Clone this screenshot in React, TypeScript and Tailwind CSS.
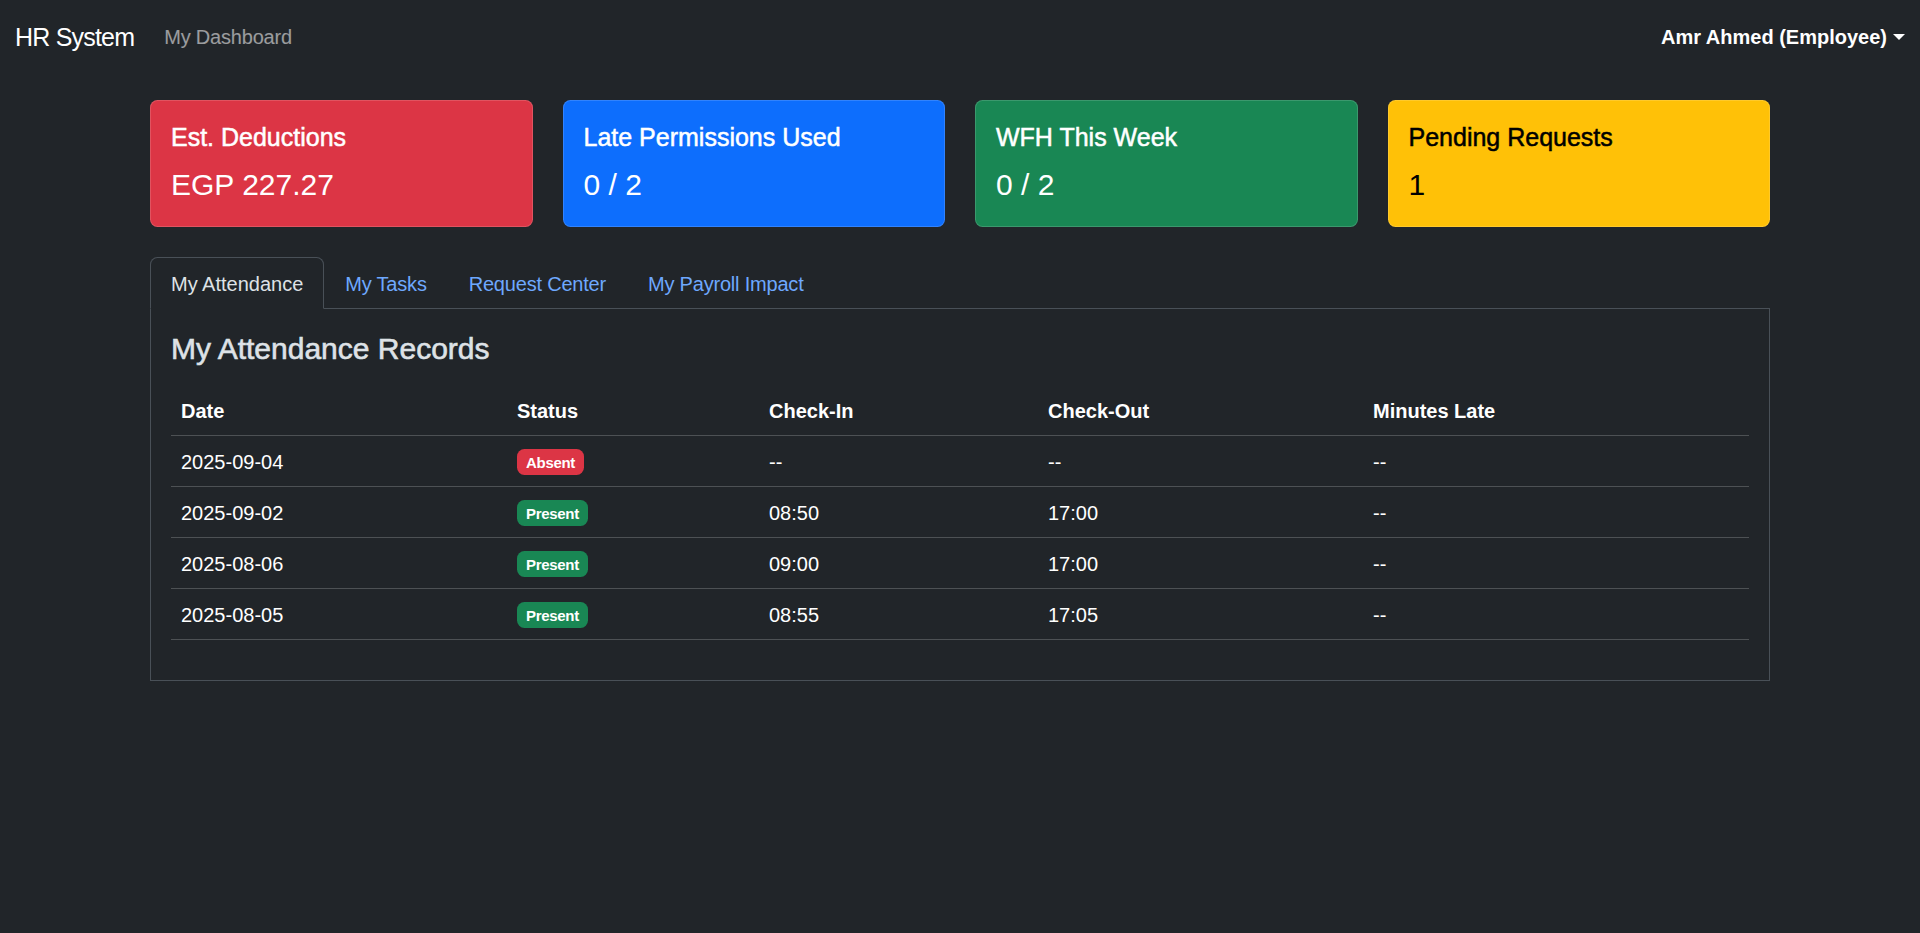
const cards = [
  { title: "Est. Deductions", value: "EGP 227.27", cls: "bg-[#dc3545] text-white" },
  { title: "Late Permissions Used", value: "0 / 2", cls: "bg-[#0d6efd] text-white" },
  { title: "WFH This Week", value: "0 / 2", cls: "bg-[#198754] text-white" },
  { title: "Pending Requests", value: "1", cls: "bg-[#ffc107] text-black" },
];

const tabs = ["My Attendance", "My Tasks", "Request Center", "My Payroll Impact"];

const rows = [
  { date: "2025-09-04", status: "Absent", inT: "--", outT: "--", late: "--" },
  { date: "2025-09-02", status: "Present", inT: "08:50", outT: "17:00", late: "--" },
  { date: "2025-08-06", status: "Present", inT: "09:00", outT: "17:00", late: "--" },
  { date: "2025-08-05", status: "Present", inT: "08:55", outT: "17:05", late: "--" },
];

function Badge({ status }: { status: string }) {
  const color = status === "Absent" ? "bg-[#dc3545]" : "bg-[#198754]";
  return (
    <span className={`${color} inline-block rounded-[7.5px] px-[9px] pt-[6px] pb-[5px] text-[15px] font-bold leading-none tracking-[-0.3px] text-white align-[1px]`}>
      {status}
    </span>
  );
}

export default function App() {
  return (
    <div className="min-h-screen bg-[#212529] text-[20px] leading-[30px] text-[#dee2e6] font-['Liberation_Sans',Arial,sans-serif]">
      {/* Navbar */}
      <nav className="flex h-[70px] items-center justify-between px-[15px] pt-[4px]">
        <div className="flex items-center">
          <span className="mr-[20px] text-[25px] leading-[37px] tracking-[-0.8px] text-white">HR System</span>
          <span className="px-[10px] tracking-[-0.2px] text-white/55">My Dashboard</span>
        </div>
        <div className="flex items-center font-bold text-white">
          Amr Ahmed (Employee)
          <span className="ml-[6px] inline-block border-x-[6px] border-t-[6px] border-x-transparent border-t-white" />
        </div>
      </nav>

      <div className="mx-auto w-[1620px] pt-[30px]">
        {/* Summary cards */}
        <div className="grid grid-cols-4 gap-[30px]">
          {cards.map((c) => (
            <div key={c.title} className={`${c.cls} rounded-[7.5px] border border-white/15 px-[20px] pt-[21px] pb-[19px]`}>
              <h5 className="mb-[10px] text-[25px] leading-[30px] font-medium [-webkit-text-stroke:0.5px_currentColor]">{c.title}</h5>
              <p className="text-[30px] leading-[45px]">{c.value}</p>
            </div>
          ))}
        </div>

        {/* Tabs */}
        <div className="mt-[30px] flex border-b border-[#495057]">
          {tabs.map((t, i) => (
            <div
              key={t}
              className={
                i === 0
                  ? "-mb-px rounded-t-[7.5px] border border-[#495057] border-b-[#212529] px-[20px] pt-[11px] pb-[9px] text-[#dee2e6]"
                  : "-mb-px rounded-t-[7.5px] border border-transparent px-[20px] pt-[11px] pb-[9px] tracking-[-0.2px] text-[#6ea8fe]"
              }
            >
              {t}
            </div>
          ))}
        </div>

        <div className="border border-t-0 border-[#495057] p-[20px]">
          <h4 className="mb-[18px] pt-[2px] text-[30px] leading-[36px] font-medium text-[#dee2e6] [-webkit-text-stroke:0.6px_currentColor]">
            My Attendance Records
          </h4>
          <table className="mb-[20px] w-full border-collapse text-left text-white">
            <colgroup>
              <col className="w-[336px]" />
              <col className="w-[252px]" />
              <col className="w-[279px]" />
              <col className="w-[325px]" />
              <col />
            </colgroup>
            <thead>
              <tr className="border-b border-[#4d5154]">
                <th className="px-[10px] pt-[11px] pb-[9px] font-bold">Date</th>
                <th className="px-[10px] pt-[11px] pb-[9px] font-bold">Status</th>
                <th className="px-[10px] pt-[11px] pb-[9px] font-bold">Check-In</th>
                <th className="px-[10px] pt-[11px] pb-[9px] font-bold">Check-Out</th>
                <th className="px-[10px] pt-[11px] pb-[9px] font-bold">Minutes Late</th>
              </tr>
            </thead>
            <tbody>
              {rows.map((r) => (
                <tr key={r.date} className="border-b border-[#4d5154]">
                  <td className="px-[10px] pt-[11px] pb-[9px]">{r.date}</td>
                  <td className="px-[10px] pt-[11px] pb-[9px]">
                    <Badge status={r.status} />
                  </td>
                  <td className="px-[10px] pt-[11px] pb-[9px]">{r.inT}</td>
                  <td className="px-[10px] pt-[11px] pb-[9px]">{r.outT}</td>
                  <td className="px-[10px] pt-[11px] pb-[9px]">{r.late}</td>
                </tr>
              ))}
            </tbody>
          </table>
        </div>
      </div>
    </div>
  );
}
